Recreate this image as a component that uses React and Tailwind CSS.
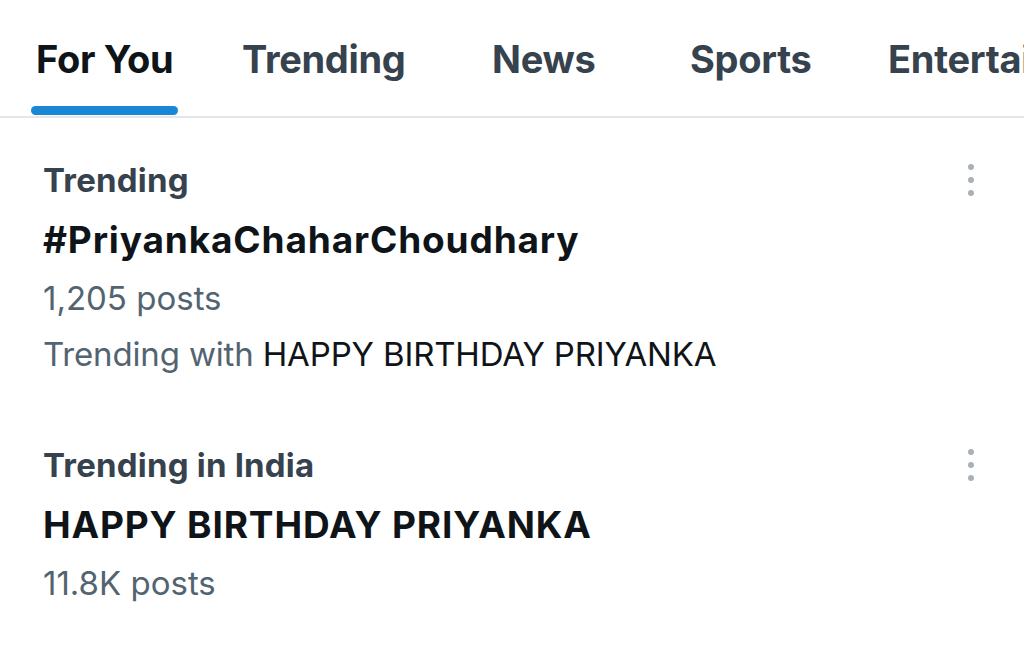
import React from "react";

const font = { fontFamily: "Inter, 'Open Sans', sans-serif" };

function Dots() {
  return (
    <div className="flex flex-col items-center gap-[7px] pt-[14px] pr-[50px]">
      <span className="block w-[6px] h-[6px] rounded-full bg-[#a9b1b8]" />
      <span className="block w-[6px] h-[6px] rounded-full bg-[#a9b1b8]" />
      <span className="block w-[6px] h-[6px] rounded-full bg-[#a9b1b8]" />
    </div>
  );
}

function Item({ label, title, posts, extra }) {
  return (
    <div className="flex justify-between pl-[43px] whitespace-nowrap">
      <div className="flex flex-col">
        <div className="text-[33px] font-bold leading-[60px] text-[#36424d] tracking-[0.2px]">{label}</div>
        <div className="text-[37px] font-bold leading-[60px] text-[#0f1419] tracking-[0.85px]">{title}</div>
        <div className="text-[33px] leading-[56px] text-[#536471]">{posts}</div>
        {extra && (
          <div className="text-[33px] leading-[56px] text-[#536471] tracking-[-0.15px]">
            Trending with <span className="text-[#0f1419]">{extra}</span>
          </div>
        )}
      </div>
      <Dots />
    </div>
  );
}

export default function App() {
  const tabs = [
    { label: "For You", active: true, w: "w-[206px]" },
    { label: "Trending", w: "w-[250px]" },
    { label: "News", w: "w-[198px]" },
    { label: "Sports", w: "w-[198px]" },
    { label: "Entertainment", w: "w-[300px]" },
  ];
  return (
    <div className="w-[1024px] h-[658px] bg-white overflow-hidden" style={font}>
      <div className="flex h-[118px] pl-[36px] border-b-2 border-[#e3e7ea] whitespace-nowrap">
        {tabs.map((t) => (
          <div key={t.label} className={`${t.w} shrink-0 relative`}>
            <div
              className={`pt-[33px] text-[38px] font-bold leading-[52px] tracking-[-0.3px] ${t.active ? "text-[#0f1419]" : "text-[#36424d]"}`}
            >
              {t.label}
            </div>
            {t.active && <div className="absolute left-[-5px] top-[106px] w-[147px] h-[9px] rounded-full bg-[#1a87d6]" />}
          </div>
        ))}
      </div>

      <div className="flex flex-col pt-[32px] gap-[53px]">
        <Item label="Trending" title="#PriyankaChaharChoudhary" posts="1,205 posts" extra="HAPPY BIRTHDAY PRIYANKA" />
        <Item label="Trending in India" title="HAPPY BIRTHDAY PRIYANKA" posts="11.8K posts" />
      </div>
    </div>
  );
}
